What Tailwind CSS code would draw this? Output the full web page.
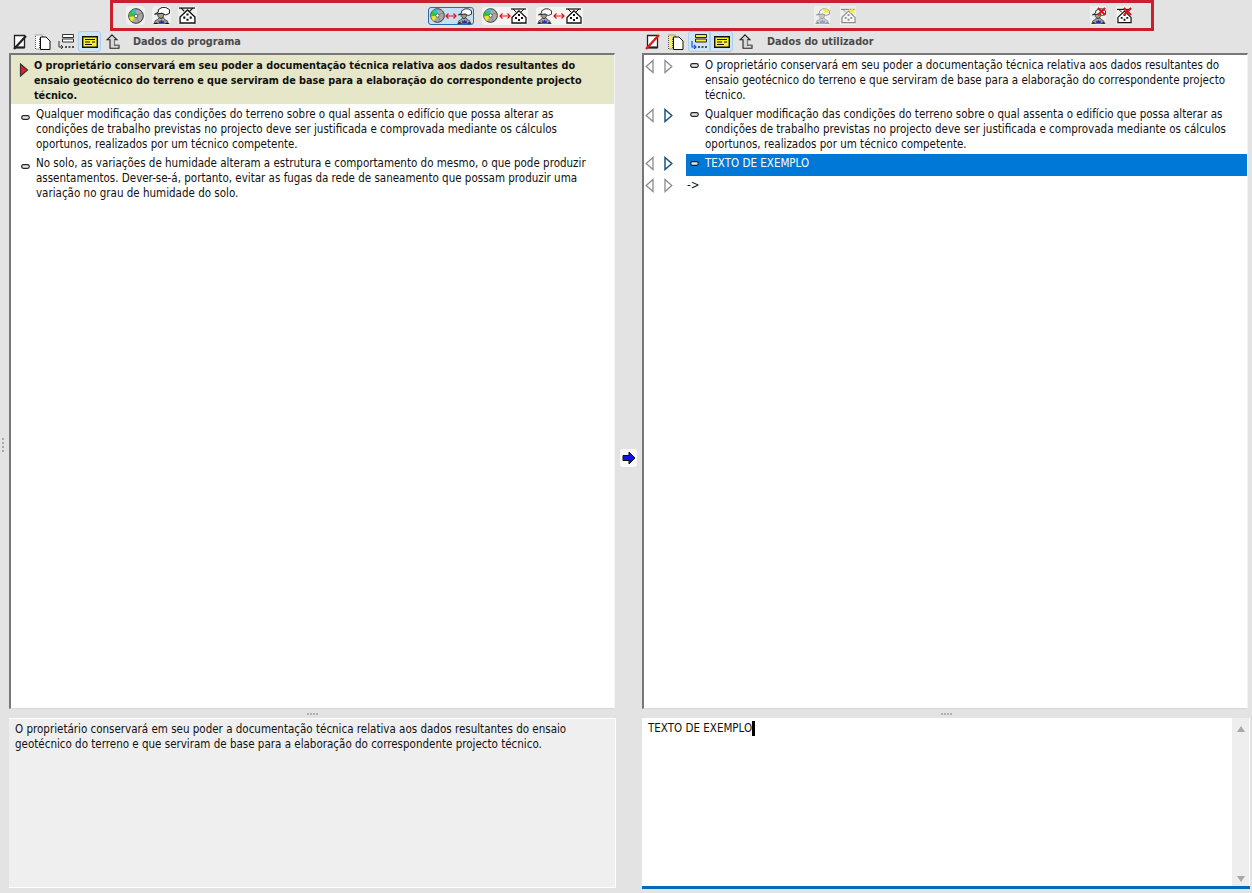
<!DOCTYPE html>
<html lang="pt">
<head>
  <meta charset="UTF-8" />
  <title>Dados do programa</title>
  <script src="https://cdn.jsdelivr.net/npm/@tailwindcss/browser@4"></script>
</head>
<body class="bg-[#e3e3e3] w-[1252px] h-[893px] overflow-hidden flex flex-col text-[11.5px] leading-[15px] text-[#111] font-['DejaVu_Sans_Condensed','DejaVu_Sans',sans-serif]">
  <!-- icon definitions -->
  <svg class="hidden">
    <symbol id="disc" viewBox="0 0 16 16">
      <circle cx="8" cy="8" r="7.300" fill="#a8a8a8" stroke="#333" />
      <path d="M8 8L3 2.800A7 7 0 0 1 8 1z" fill="#20c4d8" />
      <path d="M8 8L1.200 9A7 7 0 0 1 3 2.800z" fill="#30c830" />
      <path d="M8 8L4 13.800A7 7 0 0 1 1.200 9z" fill="#eaea20" />
      <path d="M8 8l6-3M8 8l3 6" stroke="#666" stroke-width=".6" />
      <circle cx="8" cy="8" r="1.800" fill="#fff" stroke="#444" stroke-width=".8" />
    </symbol>
    <symbol id="person" viewBox="0 0 16 16">
      <path d="M1 16l1-3 3-1.500.5-1.500h4.500l.5 1.500 3 1.500 1 3z" fill="#9a9a9a" stroke="#222" stroke-width=".6" />
      <path d="M5.500 12.500h5V15.500h-5z" fill="#1c2cc0" />
      <path d="M6 11.500h1v2H6zM9 11.500h1v2H9z" fill="#e8d828" />
      <path d="M0 16l3-1.500 2 1.500zM16 16l-3-1.500-2 1.500z" fill="#111" />
      <path d="M4.500 6h5.500v2.500L8.500 10.500H6.500L4.500 8.500z" fill="#a09a88" stroke="#222" stroke-width=".7" />
      <path d="M1.500 6.800L5 4.800V2.500L8.500 .4h3.500L15.500 2.500V6L12 7.500 8.500 5.800z" fill="#fff" stroke="#111" stroke-width=".9" />
    </symbol>
    <symbol id="house" viewBox="0 0 16 16">
      <path d="M0 1h15" stroke="#111" stroke-width="1.200" />
      <path d="M2 1l3 3M13 1l-3 3" stroke="#111" />
      <path d="M8 2.800L1 9.500v5.500h14V9.500z" fill="#fff" stroke="#111" stroke-width="1.300" />
      <path d="M7 6h2v2H7zM4 9h2v2H4zM10 9h2v2h-2zM7 11h2v2H7z" fill="#111" />
    </symbol>
    <symbol id="redarrows" viewBox="0 0 12 8">
      <path d="M1 4h10M3.500 1.500L1 4l2.500 2.500M8.500 1.500L11 4 8.500 6.500" fill="none" stroke="#ee0c0c" stroke-width="1.200" />
    </symbol>
    <symbol id="star" viewBox="0 0 8 8">
      <path d="M4 0l1 2.700L8 2 5.800 4 7 7 4 5.300 1 7l1.200-3L0 2l3 .7z" fill="#f2ee30" />
    </symbol>
    <symbol id="redx" viewBox="0 0 10 10">
      <path d="M1 1l8 8M9 1l-8 8" stroke="#e01020" stroke-width="2.400" />
    </symbol>
    <symbol id="page" viewBox="0 0 16 16">
      <path d="M.5 1h7v3h-3v11h-4z" fill="#f4ee60" stroke="#555" stroke-dasharray="1 1" />
      <path d="M5.500 3h5.500l4 4v8.500H5.500z" fill="#fff" stroke="#111" />
    </symbol>
    <symbol id="pagegrey" viewBox="0 0 16 16">
      <path d="M.5 1h7v3h-3v11h-4z" fill="#fff" stroke="#555" stroke-dasharray="1 1" />
      <path d="M5.500 3h5.500l4 4v8.500H5.500z" fill="#fff" stroke="#111" />
    </symbol>
    <symbol id="blank" viewBox="0 0 14 15">
      <path d="M1.500 1.500h10v12h-10z" fill="#fff" stroke="#222" stroke-width="1.300" />
      <path d="M1.500 13.500h10" stroke="#222" stroke-width="2" />
    </symbol>
    <symbol id="list" viewBox="0 0 16 15">
      <path d="M4.500 .5h11v3h-11zM4.500 5h11v3h-11z" fill="#fff" stroke="#333" />
      <path d="M1 7v6h4M3 11l2 2-2 2" fill="none" stroke="#333" />
      <path d="M7 13h2M10.500 13h2M14 13h2" stroke="#222" stroke-width="1.300" />
    </symbol>
    <symbol id="listyellow" viewBox="0 0 16 15">
      <path d="M4.500 .5h11v3h-11zM4.500 5h11v3h-11z" fill="#f6ee30" stroke="#222" />
      <path d="M1 7v6h4M3 11l2 2-2 2" fill="none" stroke="#1a4fe8" stroke-width="1.200" />
      <path d="M7 13h2M10.500 13h2M14 13h2" stroke="#222" stroke-width="1.300" />
    </symbol>
    <symbol id="note" viewBox="0 0 16 12">
      <path d="M.7.700h14.600v10.600H.700z" fill="#f8ee30" stroke="#111" stroke-width="1.400" />
      <path d="M3 3.500h10M3 6h5M10 6h3M3 8.500h7" stroke="#111" stroke-width="1.100" />
    </symbol>
    <symbol id="up" viewBox="0 0 14 15">
      <path d="M6 .8l5 5H8.500v5.500H13v3H4V5.800H1z" fill="#d8d8d8" stroke="#222" stroke-width="1.100" />
      <path d="M8.500 5.800v5.500H13" fill="none" stroke="#777" />
    </symbol>
    <symbol id="tri-l" viewBox="0 0 9 14"><path d="M8 1v12L1.200 7z" fill="#fff" stroke="#8c8c8c" stroke-width="1.300" /></symbol>
    <symbol id="tri-r" viewBox="0 0 9 14"><path d="M1 1v12l6.800-6z" fill="#fff" stroke="#8c8c8c" stroke-width="1.300" /></symbol>
    <symbol id="tri-on" viewBox="0 0 9 14"><path d="M1 1v12l6.800-6z" fill="#fff" stroke="#1f5488" stroke-width="1.500" /></symbol>
    <symbol id="dash" viewBox="0 0 9 5"><rect x=".7" y=".7" width="7.600" height="3.600" rx="1.800" fill="#e6e6e6" stroke="#222" stroke-width="1.200" /></symbol>
  </svg>

  <!-- top toolbar, red frame -->
  <div class="h-[31px] w-[1044px] ml-[110px] border-[3px] border-[#c9202f] flex items-center shrink-0">
    <div class="ml-[13px] w-[19px] h-[19px] bg-[#f0f0f0] rounded-sm flex items-center justify-center"><svg class="w-[16px] h-[16px]"><use href="#disc" /></svg></div>
    <div class="ml-[7px] w-[19px] h-[19px] bg-[#f0f0f0] rounded-sm flex items-center justify-center"><svg class="w-[17px] h-[17px]"><use href="#person" /></svg></div>
    <div class="ml-[7px] w-[19px] h-[19px] bg-[#f0f0f0] rounded-sm flex items-center justify-center"><svg class="w-[17px] h-[17px]"><use href="#house" /></svg></div>

    <div class="ml-[231px] w-[46px] h-[18px] bg-[#c5e0f5] border border-[#2a6ca8] rounded-[3px] flex items-center justify-between px-[1px]">
      <svg class="w-[15px] h-[15px]"><use href="#disc" /></svg>
      <svg class="w-[12px] h-[8px]"><use href="#redarrows" /></svg>
      <svg class="w-[15px] h-[16px]"><use href="#person" /></svg>
    </div>
    <div class="ml-[8px] w-[46px] h-[18px] bg-[#f4f4f4] rounded-[3px] flex items-center justify-between px-[1px]">
      <svg class="w-[15px] h-[15px]"><use href="#disc" /></svg>
      <svg class="w-[12px] h-[8px]"><use href="#redarrows" /></svg>
      <svg class="w-[16px] h-[16px]"><use href="#house" /></svg>
    </div>
    <div class="ml-[8px] w-[47px] h-[18px] bg-[#f4f4f4] rounded-[3px] flex items-center justify-between px-[1px]">
      <svg class="w-[15px] h-[16px]"><use href="#person" /></svg>
      <svg class="w-[12px] h-[8px]"><use href="#redarrows" /></svg>
      <svg class="w-[16px] h-[16px]"><use href="#house" /></svg>
    </div>

    <div class="ml-[231px] relative w-[16px] h-[19px] bg-[#efefef] flex items-center justify-center">
      <svg class="w-[15px] h-[16px] opacity-45"><use href="#person" /></svg>
      <svg class="absolute w-[8px] h-[8px] top-[1px] right-0"><use href="#star" /></svg>
    </div>
    <div class="ml-[10px] relative w-[16px] h-[19px] bg-[#efefef] flex items-center justify-center">
      <svg class="w-[15px] h-[16px] opacity-45"><use href="#house" /></svg>
      <svg class="absolute w-[8px] h-[8px] top-[1px] right-0"><use href="#star" /></svg>
    </div>

    <div class="ml-[234px] relative w-[16px] h-[19px] bg-[#efefef] flex items-center justify-center">
      <svg class="w-[15px] h-[16px]"><use href="#person" /></svg>
      <svg class="absolute w-[9px] h-[9px] top-[1px] right-0"><use href="#redx" /></svg>
    </div>
    <div class="ml-[10px] relative w-[16px] h-[19px] bg-[#efefef] flex items-center justify-center">
      <svg class="w-[15px] h-[16px]"><use href="#house" /></svg>
      <svg class="absolute w-[9px] h-[9px] top-[1px] right-0"><use href="#redx" /></svg>
    </div>
  </div>

  <!-- panel headers -->
  <div class="h-[22px] pb-[1px] flex items-center shrink-0">
    <div class="w-[628px] pl-[11px] flex items-center">
      <div class="w-[18px] h-[20px] flex items-center justify-center relative">
        <svg class="w-[14px] h-[15px]"><use href="#blank" /></svg>
        <svg class="absolute w-[16px] h-[16px]" viewBox="0 0 16 16"><path d="M2 15L14 2" stroke="#222" stroke-width="2.200" /></svg>
      </div>
      <div class="ml-[5px] w-[18px] h-[20px] flex items-center justify-center"><svg class="w-[16px] h-[16px]"><use href="#pagegrey" /></svg></div>
      <div class="ml-[4px] w-[20px] h-[20px] flex items-center justify-center"><svg class="w-[16px] h-[15px]"><use href="#list" /></svg></div>
      <div class="ml-[2px] w-[23px] h-[21px] bg-[#cfe4f6] border border-[#a9d0f0] rounded-[3px] flex items-center justify-center"><svg class="w-[16px] h-[12px]"><use href="#note" /></svg></div>
      <div class="ml-[3px] w-[18px] h-[20px] flex items-center justify-center"><svg class="w-[14px] h-[15px]"><use href="#up" /></svg></div>
      <span class="ml-[11px] font-bold text-[10.8px] text-[#4a4a4a]">Dados do programa</span>
    </div>
    <div class="flex items-center pl-[16px]">
      <div class="w-[18px] h-[20px] flex items-center justify-center relative">
        <svg class="w-[14px] h-[15px]"><use href="#blank" /></svg>
        <svg class="absolute w-[16px] h-[16px]" viewBox="0 0 16 16"><path d="M1 15L14 1" stroke="#e01818" stroke-width="2.400" /></svg>
      </div>
      <div class="ml-[5px] w-[18px] h-[20px] flex items-center justify-center"><svg class="w-[16px] h-[16px]"><use href="#page" /></svg></div>
      <div class="ml-[3px] w-[22px] h-[21px] bg-[#cfe4f6] border border-[#a9d0f0] rounded-l-[3px] flex items-center justify-center"><svg class="w-[16px] h-[15px]"><use href="#listyellow" /></svg></div>
      <div class="w-[23px] h-[21px] bg-[#cfe4f6] border border-[#a9d0f0] rounded-r-[3px] flex items-center justify-center"><svg class="w-[16px] h-[12px]"><use href="#note" /></svg></div>
      <div class="ml-[4px] w-[18px] h-[20px] flex items-center justify-center"><svg class="w-[14px] h-[15px]"><use href="#up" /></svg></div>
      <span class="ml-[12px] font-bold text-[10.8px] text-[#4a4a4a]">Dados do utilizador</span>
    </div>
  </div>

  <!-- list panels -->
  <div class="h-[656px] flex shrink-0">
    <div class="w-[9px] flex flex-col items-center gap-[2px] pr-[3px] pt-[385px]">
      <i class="w-[2px] h-[2px] bg-[#a8a8a8]"></i><i class="w-[2px] h-[2px] bg-[#a8a8a8]"></i><i class="w-[2px] h-[2px] bg-[#a8a8a8]"></i><i class="w-[2px] h-[2px] bg-[#a8a8a8]"></i>
    </div>
    <div class="w-[606px] bg-white border-l-2 border-t-2 border-l-[#777] border-t-[#777] border-r border-b border-r-[#f4f4f4] border-b-[#d8d8d8]">
      <div class="bg-[#e6e6c8] h-[49px] pl-[8px] pt-[3px] flex font-bold text-[10.75px] whitespace-nowrap">
        <svg class="w-[10px] h-[14px] mt-[5px] shrink-0" viewBox="0 0 10 14"><path d="M1.500 1v12L8.500 7z" fill="#ee1c25" stroke="#333" stroke-width="1.200" /></svg>
        <p class="ml-[5px]">O proprietário conservará em seu poder a documentação técnica relativa aos dados resultantes do<br>ensaio geotécnico do terreno e que serviram de base para a elaboração do correspondente projecto<br>técnico.</p>
      </div>
      <div class="pl-[10px] pt-[3px] h-[49px] flex whitespace-nowrap">
        <svg class="w-[9px] h-[5px] mt-[8px] shrink-0"><use href="#dash" /></svg>
        <p class="ml-[6px]">Qualquer modificação das condições do terreno sobre o qual assenta o edifício que possa alterar as<br>condições de trabalho previstas no projecto deve ser justificada e comprovada mediante os cálculos<br>oportunos, realizados por um técnico competente.</p>
      </div>
      <div class="pl-[10px] pt-[3px] flex whitespace-nowrap">
        <svg class="w-[9px] h-[5px] mt-[8px] shrink-0"><use href="#dash" /></svg>
        <p class="ml-[6px]">No solo, as variações de humidade alteram a estrutura e comportamento do mesmo, o que pode produzir<br>assentamentos. Dever-se-á, portanto, evitar as fugas da rede de saneamento que possam produzir uma<br>variação no grau de humidade do solo.</p>
      </div>
    </div>
    <div class="w-[27px] flex justify-center pt-[396px]">
      <div class="w-[17px] h-[18px] bg-[#fafafa] rounded-[3px] flex items-center justify-center">
        <svg class="w-[14px] h-[14px]" viewBox="0 0 14 14"><path d="M1 4.500h6V1l6 6-6 6V9.500H1z" fill="#1010f0" stroke="#111" /></svg>
      </div>
    </div>
    <div class="w-[606px] bg-white border-l-2 border-t-2 border-l-[#777] border-t-[#777] border-r border-b border-r-[#f4f4f4] border-b-[#d8d8d8] whitespace-nowrap">
      <div class="h-[49px] pt-[3px] flex">
        <div class="w-[42px] pl-[1px] flex gap-[10px] shrink-0 pt-[1px] h-[17px]"><svg class="w-[9px] h-[15px]"><use href="#tri-l" /></svg><svg class="w-[9px] h-[15px]"><use href="#tri-r" /></svg></div>
        <div class="pl-[4px] flex">
          <svg class="w-[9px] h-[5px] mt-[5px] shrink-0"><use href="#dash" /></svg>
          <p class="ml-[6px]">O proprietário conservará em seu poder a documentação técnica relativa aos dados resultantes do<br>ensaio geotécnico do terreno e que serviram de base para a elaboração do correspondente projecto<br>técnico.</p>
        </div>
      </div>
      <div class="h-[50px] pt-[3px] flex">
        <div class="w-[42px] pl-[1px] flex gap-[10px] shrink-0 pt-[1px] h-[17px]"><svg class="w-[9px] h-[15px]"><use href="#tri-l" /></svg><svg class="w-[9px] h-[15px]"><use href="#tri-on" /></svg></div>
        <div class="pl-[4px] flex">
          <svg class="w-[9px] h-[5px] mt-[5px] shrink-0"><use href="#dash" /></svg>
          <p class="ml-[6px]">Qualquer modificação das condições do terreno sobre o qual assenta o edifício que possa alterar as<br>condições de trabalho previstas no projecto deve ser justificada e comprovada mediante os cálculos<br>oportunos, realizados por um técnico competente.</p>
        </div>
      </div>
      <div class="h-[22px] flex">
        <div class="w-[42px] pl-[1px] flex gap-[10px] shrink-0 pt-[2px]"><svg class="w-[9px] h-[15px]"><use href="#tri-l" /></svg><svg class="w-[9px] h-[15px]"><use href="#tri-on" /></svg></div>
        <div class="flex-1 bg-[#0078d7] text-white pl-[4px] pt-[2px] flex">
          <svg class="w-[9px] h-[5px] mt-[5px] shrink-0"><use href="#dash" /></svg>
          <p class="ml-[6px]">TEXTO DE EXEMPLO</p>
        </div>
      </div>
      <div class="h-[22px] flex">
        <div class="w-[42px] pl-[1px] flex gap-[10px] shrink-0 pt-[2px]"><svg class="w-[9px] h-[15px]"><use href="#tri-l" /></svg><svg class="w-[9px] h-[15px]"><use href="#tri-r" /></svg></div>
        <p class="pt-[2px] pl-[1px]">-&gt;</p>
      </div>
    </div>
  </div>

  <!-- splitter -->
  <div class="h-[9px] flex shrink-0">
    <div class="w-[625px] flex items-center justify-center gap-[1px]"><i class="w-[2px] h-[2px] bg-[#b0b0b0]"></i><i class="w-[2px] h-[2px] bg-[#b0b0b0]"></i><i class="w-[2px] h-[2px] bg-[#b0b0b0]"></i><i class="w-[2px] h-[2px] bg-[#b0b0b0]"></i></div>
    <div class="w-[627px] flex items-center justify-center gap-[1px] pl-[15px]"><i class="w-[2px] h-[2px] bg-[#b0b0b0]"></i><i class="w-[2px] h-[2px] bg-[#b0b0b0]"></i><i class="w-[2px] h-[2px] bg-[#b0b0b0]"></i><i class="w-[2px] h-[2px] bg-[#b0b0b0]"></i></div>
  </div>

  <!-- text editors -->
  <div class="h-[171px] flex shrink-0 pl-[9px]">
    <div class="w-[607px] h-[170px] bg-[#efefef] border-t border-r border-b border-white pl-[6px] pt-[3px]">
      <p class="whitespace-nowrap">O proprietário conservará em seu poder a documentação técnica relativa aos dados resultantes do ensaio<br>geotécnico do terreno e que serviram de base para a elaboração do correspondente projecto técnico.</p>
    </div>
    <div class="ml-[26px] w-[608px] h-[171px] bg-white border-b-[3px] border-[#0069c0] flex">
      <div class="flex-1 pl-[6px] pt-[3px] flex items-start">
        <span>TEXTO DE EXEMPLO</span><i class="w-[3px] h-[15px] bg-black"></i>
      </div>
      <div class="w-[17px] mr-[1px] bg-[#eeeeee] flex flex-col items-center justify-between pt-[8px] pb-[4px]">
        <svg class="w-[8px] h-[6px]" viewBox="0 0 8 6"><path d="M4 0l4 6H0z" fill="#a8a8a8" /></svg>
        <svg class="w-[8px] h-[6px]" viewBox="0 0 8 6"><path d="M0 0h8L4 6z" fill="#a8a8a8" /></svg>
      </div>
    </div>
  </div>
</body>
</html>
